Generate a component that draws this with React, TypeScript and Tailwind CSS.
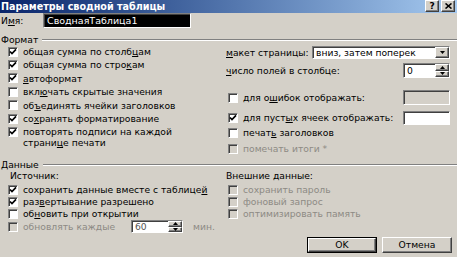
import React from "react";

const sunken =
  "border-t border-l border-b border-r border-t-[#808080] border-l-[#808080] border-b-white border-r-white shadow-[inset_1px_1px_0_#404040]";
const raised =
  "bg-[#d4d0c8] border-t border-l border-b border-r border-t-white border-l-white border-b-[#404040] border-r-[#404040] shadow-[inset_-1px_-1px_0_#808080]";

function Check({ checked, disabled }: { checked?: boolean; disabled?: boolean }) {
  return (
    <span
      className={`relative flex items-center justify-center w-[10px] h-[10px] shrink-0 ${sunken} ${
        disabled ? "bg-[#d4d0c8]" : "bg-white"
      }`}
    >
      {checked && (
        <svg width="8" height="8" viewBox="0 0 8 8">
          <path d="M1 3.5 L3 5.6 L7 1.4" fill="none" stroke={disabled ? "#808080" : "#000"} strokeWidth="1.7" />
        </svg>
      )}
    </span>
  );
}

function CheckRow({
  checked,
  disabled,
  children,
  className = "",
}: {
  checked?: boolean;
  disabled?: boolean;
  children: React.ReactNode;
  className?: string;
}) {
  return (
    <div className={`flex items-center gap-[5px] ${className}`}>
      <Check checked={checked} disabled={disabled} />
      <span className={disabled ? "text-[#8d8a84]" : ""}>{children}</span>
    </div>
  );
}

function U({ children }: { children: React.ReactNode }) {
  return <span className="underline underline-offset-[1px]">{children}</span>;
}

function Arrow({ up }: { up?: boolean }) {
  return (
    <svg width="5" height="3" viewBox="0 0 5 3">
      <path d={up ? "M0 3 L2.5 0 L5 3 Z" : "M0 0 L5 0 L2.5 3 Z"} fill="#000" />
    </svg>
  );
}

function Spin({ value, width, disabled }: { value: string; width: string; disabled?: boolean }) {
  return (
    <div className={`flex ${width} h-full ${sunken} bg-white`}>
      <span className={`flex-1 flex items-center pl-[3px] ${disabled ? "text-[#555]" : ""}`}>{value}</span>
      <div className="flex flex-col w-[14px] h-full">
        <div className={`flex-1 flex items-center justify-center ${raised}`}>
          <Arrow up />
        </div>
        <div className={`flex-1 flex items-center justify-center ${raised}`}>
          <Arrow />
        </div>
      </div>
    </div>
  );
}

function SectionHead({ label, className = "" }: { label: string; className?: string }) {
  return (
    <div className={`flex items-center h-[10px] ${className}`}>
      <span className="pr-[4px]">{label}</span>
      <div className="flex-1 border-t border-b border-t-[#808080] border-b-white" />
    </div>
  );
}

export default function App() {
  return (
    <div className="w-[457px] h-[257px] overflow-hidden bg-[#d4d0c8] text-black text-[9.2px] leading-none font-['DejaVu_Sans',sans-serif]">
      {/* title bar */}
      <div className="flex items-center h-[13px] bg-gradient-to-r from-[#0a246a] to-[#a6caf0]">
        <span className="pl-[1px] text-white font-bold text-[9.6px]">Параметры сводной таблицы</span>
        <div className="ml-auto flex gap-[2px] pr-[2px] self-start">
          <div className={`w-[14px] h-[12px] flex items-center justify-center text-[9px] font-bold ${raised}`}>?</div>
          <div className={`w-[14px] h-[12px] flex items-center justify-center ${raised}`}>
            <svg width="7" height="6" viewBox="0 0 7 6">
              <path d="M0.5 0.5 L6.5 5.5 M6.5 0.5 L0.5 5.5" stroke="#000" strokeWidth="1.6" />
            </svg>
          </div>
        </div>
      </div>

      {/* name */}
      <div className="flex items-center h-[15px]">
        <span className="pl-[1px] w-[43px]">
          И<U>м</U>я:
        </span>
        <div className={`w-[148px] h-full flex items-center pl-[3px] bg-black text-white text-[9.5px] ${sunken}`}>
          СводнаяТаблица1
        </div>
      </div>

      <SectionHead label="Формат" className="mt-[7px] pl-[1px]" />

      <div className="flex">
        <div className="w-[226px] pl-[8px]">
          <CheckRow checked className="h-[13.4px]">
            общая сумма по столб<U>ц</U>ам
          </CheckRow>
          <CheckRow checked className="h-[13.4px]">
            общая сумма по стро<U>к</U>ам
          </CheckRow>
          <CheckRow checked className="h-[13.4px]">
            <U>а</U>втоформат
          </CheckRow>
          <CheckRow className="h-[13.4px]">
            вкл<U>ю</U>чать скрытые значения
          </CheckRow>
          <CheckRow className="h-[13.4px]">
            об<U>ъ</U>единять ячейки заголовков
          </CheckRow>
          <CheckRow checked className="h-[13.4px]">
            со<U>х</U>ранять форматирование
          </CheckRow>
          <div className="flex items-start gap-[5px] pt-[2px]">
            <Check checked />
            <span className="leading-[11px] mt-[-1px]">
              повторять подписи на каждой
              <br />
              страни<U>ц</U>е печати
            </span>
          </div>
        </div>

        <div className="flex-1 pr-[7px]">
          <div className="flex items-center justify-between h-[13px] mt-[1px]">
            <span>
              <U>м</U>акет страницы:
            </span>
            <div className={`flex w-[138px] h-full bg-white ${sunken}`}>
              <span className="flex-1 flex items-center pl-[3px]">вниз, затем поперек</span>
              <div className={`w-[14px] flex items-center justify-center ${raised}`}>
                <Arrow />
              </div>
            </div>
          </div>
          <div className="flex items-center justify-between h-[15px] mt-[4px]">
            <span>
              <U>ч</U>исло полей в столбце:
            </span>
            <Spin value="0" width="w-[47px]" />
          </div>
          <div className="flex items-center justify-between h-[15px] mt-[12px] pl-[2px]">
            <CheckRow className="gap-[4px]">
              для о<U>ш</U>ибок отображать:
            </CheckRow>
            <div className={`w-[47px] h-full bg-[#d4d0c8] ${sunken}`} />
          </div>
          <div className="flex items-center justify-between h-[14px] mt-[6px] pl-[2px]">
            <CheckRow checked className="gap-[4px]">
              для пуст<U>ы</U>х ячеек отображать:
            </CheckRow>
            <div className={`w-[47px] h-full bg-white ${sunken}`} />
          </div>
          <CheckRow className="h-[13px] mt-[1px] pl-[2px] gap-[4px]">
            печат<U>ь</U> заголовков
          </CheckRow>
          <CheckRow disabled className="h-[13px] mt-[3px] pl-[2px] gap-[4px]">
            помечать итоги *
          </CheckRow>
        </div>
      </div>

      <SectionHead label="Данные" className="mt-[5px] pl-[1px]" />

      <div className="flex">
        <div className="w-[226px] pl-[8px]">
          <div className="flex items-center h-[12px] pl-[2px]">Источник:</div>
          <CheckRow checked className="h-[12px] mt-[2px]">
            сохранить данные вместе с таблице<U>й</U>
          </CheckRow>
          <CheckRow checked className="h-[12px]">
            раз<U>в</U>ертывание разрешено
          </CheckRow>
          <CheckRow className="h-[12px]">
            об<U>н</U>овить при открытии
          </CheckRow>
          <div className="flex items-center h-[13px]">
            <CheckRow disabled className="w-[123px]">
              обновлять каждые
            </CheckRow>
            <Spin value="60" width="w-[52px]" disabled />
            <span className="ml-[10px] text-[#8d8a84]">мин.</span>
          </div>
        </div>
        <div className="flex-1">
          <div className="flex items-center h-[12px]">Внешние данные:</div>
          <CheckRow disabled className="h-[12px] mt-[2px] pl-[2px] gap-[4px]">
            сохранить пароль
          </CheckRow>
          <CheckRow disabled className="h-[12px] pl-[2px] gap-[4px]">
            фоновый запрос
          </CheckRow>
          <CheckRow disabled className="h-[12px] pl-[2px] gap-[4px]">
            оптимизировать память
          </CheckRow>
        </div>
      </div>

      <div className="flex justify-end gap-[5px] mt-[4px] pr-[5px]">
        <div className="w-[70px] h-[16px] border border-black">
          <div className={`w-full h-full flex items-center justify-center ${raised}`}>OK</div>
        </div>
        <div className={`w-[70px] h-[16px] flex items-center justify-center ${raised}`}>Отмена</div>
      </div>
    </div>
  );
}
